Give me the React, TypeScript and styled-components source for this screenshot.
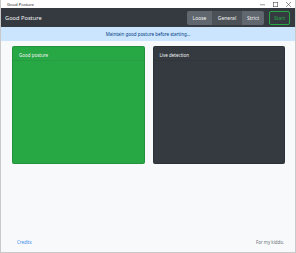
import React from 'react';
import styled, { createGlobalStyle } from 'styled-components';

const GlobalStyle = createGlobalStyle`
  html, body {
    margin: 0;
    padding: 0;
    background: #ffffff;
  }
  #root {
    width: 296px;
    height: 253px;
  }
  * {
    box-sizing: border-box;
  }
`;

const StyledWindow = styled.div`
  display: flex;
  flex-direction: column;
  width: 296px;
  height: 253px;
  border: 1px solid #c9c9c9;
  border-top: none;
  background: #f8f9fa;
  font-family: 'Noto Sans', 'Open Sans', sans-serif;
  overflow: hidden;
`;

const StyledTitleBar = styled.div`
  display: flex;
  align-items: center;
  justify-content: space-between;
  height: 8px;
  padding: 0 4px 0 6px;
  background: #ffffff;
  font-size: 4.2px;
  color: #222;
`;

const StyledWinControls = styled.div`
  display: flex;
  gap: 8px;
  align-items: center;
`;

const StyledNavbar = styled.div`
  display: flex;
  align-items: center;
  justify-content: space-between;
  height: 19px;
  padding: 0 5px 0 4px;
  background: #343a40;
`;

const StyledBrand = styled.div`
  color: #f2f2f2;
  font-size: 5.7px;
`;

const StyledNavRight = styled.div`
  display: flex;
  align-items: center;
  gap: 5px;
`;

const StyledGroup = styled.div`
  display: flex;
  height: 14px;
  border-radius: 2px;
  overflow: hidden;
`;

const StyledModeButton = styled.div<{ $w: number; $active?: boolean }>`
  display: flex;
  align-items: center;
  justify-content: center;
  width: ${(p) => p.$w}px;
  background: ${(p) => (p.$active ? '#4b5157' : '#60676e')};
  color: #f2f2f2;
  font-size: 5px;
`;

const StyledStart = styled.div`
  display: flex;
  align-items: center;
  justify-content: center;
  width: 21px;
  height: 14px;
  border: 1px solid #28a745;
  border-radius: 2px;
  color: #28a745;
  font-size: 5px;
`;

const StyledAlert = styled.div`
  display: flex;
  align-items: center;
  justify-content: center;
  height: 14px;
  background: #cce5ff;
  color: #004085;
  font-size: 4.5px;
`;

const StyledMain = styled.div`
  display: grid;
  grid-template-columns: 1fr 1fr;
  gap: 8px;
  height: 118px;
  margin: 5px 10px 0 11px;
`;

const StyledCard = styled.div<{ $bg: string }>`
  display: flex;
  flex-direction: column;
  background: ${(p) => p.$bg};
  border: 1px solid rgba(0, 0, 0, 0.125);
  border-radius: 2px;
`;

const StyledCardHeader = styled.div`
  height: 14px;
  padding: 4.5px 6px 0;
  color: #f2f2f2;
  font-size: 4.5px;
  border-bottom: 1px solid rgba(0, 0, 0, 0.06);
`;

const StyledFooter = styled.div`
  display: flex;
  justify-content: space-between;
  align-items: center;
  margin-top: auto;
  padding: 0 11px 7px 16px;
  font-size: 4.4px;
`;

const StyledLink = styled.span`
  color: #3b8ef0;
`;

const StyledMuted = styled.span`
  color: #6c757d;
`;

const WinIcon = ({ kind }: { kind: 'min' | 'max' | 'close' }) => (
  <svg width="5" height="5" viewBox="0 0 10 10" fill="none" stroke="#333" strokeWidth="1">
    {kind === 'min' && <line x1="0" y1="5.5" x2="10" y2="5.5" />}
    {kind === 'max' && <rect x="0.5" y="0.5" width="9" height="9" />}
    {kind === 'close' && (
      <>
        <line x1="0" y1="0" x2="10" y2="10" />
        <line x1="10" y1="0" x2="0" y2="10" />
      </>
    )}
  </svg>
);

const App = () => {
  return (
    <>
      <GlobalStyle />
      <StyledWindow>
        <StyledTitleBar>
          <span>Good Posture</span>
          <StyledWinControls>
            <WinIcon kind="min" />
            <WinIcon kind="max" />
            <WinIcon kind="close" />
          </StyledWinControls>
        </StyledTitleBar>
        <StyledNavbar>
          <StyledBrand>Good Posture</StyledBrand>
          <StyledNavRight>
            <StyledGroup>
              <StyledModeButton $w={25}>Loose</StyledModeButton>
              <StyledModeButton $w={30} $active>
                General
              </StyledModeButton>
              <StyledModeButton $w={22}>Strict</StyledModeButton>
            </StyledGroup>
            <StyledStart>Start</StyledStart>
          </StyledNavRight>
        </StyledNavbar>
        <StyledAlert>Maintain good posture before starting...</StyledAlert>
        <StyledMain>
          <StyledCard $bg="#28a745">
            <StyledCardHeader>Good posture</StyledCardHeader>
          </StyledCard>
          <StyledCard $bg="#343a40">
            <StyledCardHeader>Live detection</StyledCardHeader>
          </StyledCard>
        </StyledMain>
        <StyledFooter>
          <StyledLink>Credits</StyledLink>
          <StyledMuted>For my kiddo.</StyledMuted>
        </StyledFooter>
      </StyledWindow>
    </>
  );
};

export default App;
